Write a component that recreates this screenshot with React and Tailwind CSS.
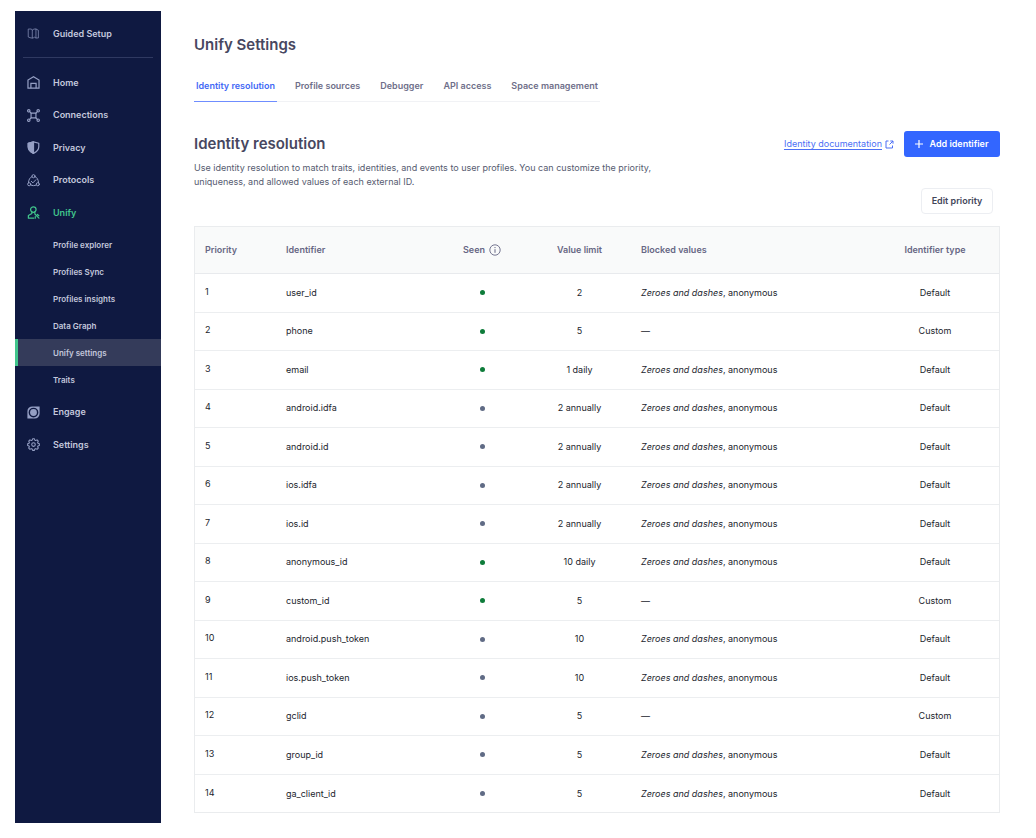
import React from "react";

const iconProps = {
  viewBox: "0 0 16 16",
  fill: "none",
  stroke: "currentColor",
  strokeWidth: 1.3,
  strokeLinecap: "round",
  strokeLinejoin: "round",
  className: "h-[13px] w-[13px] shrink-0",
  "aria-hidden": true,
};

const MapIcon = () => (
  <svg {...iconProps} strokeWidth={1}>
    <path d="M2 2.5h3.500L6.500 4l2-1.500H11L14 4v9.500h-3l-1.500-1-2 1H5l-3-1zM6.500 4v9.500M11 2.500v11" />
  </svg>
);

const HomeIcon = () => (
  <svg {...iconProps} strokeWidth={1.5} strokeLinecap="butt" strokeLinejoin="miter">
    <path d="M1.2 15V5L8 1l6.8 4v10z" />
    <path d="M4.8 15V9h6.4v6" />
  </svg>
);

const ConnectionsIcon = () => (
  <svg {...iconProps} strokeWidth={1.4}>
    <rect x="5" y="5" width="6" height="6" />
    <circle cx="2.2" cy="2.2" r="1.5" />
    <circle cx="13.8" cy="2.2" r="1.5" />
    <circle cx="2.2" cy="13.8" r="1.5" />
    <circle cx="13.8" cy="13.8" r="1.5" />
    <path d="M3.3 3.3 5 5m7.7-1.7L11 5m-7.7 7.7L5 11m7.7 1.7L11 11" />
  </svg>
);

const PrivacyIcon = () => (
  <svg {...iconProps} strokeWidth={1.5}>
    <path d="M8 1 14.5 2.8v4.4c0 3.6-2.6 6.2-6.5 8-3.9-1.8-6.5-4.4-6.5-8V2.8z" />
    <path d="M8 1v14.2c-3.9-1.8-6.5-4.4-6.5-8V2.8z" fill="currentColor" />
  </svg>
);

const ProtocolsIcon = () => (
  <svg {...iconProps} strokeWidth={1.2}>
    <circle cx="8" cy="2.7" r="1.9" />
    <circle cx="2.7" cy="12.6" r="1.9" />
    <circle cx="13.3" cy="12.6" r="1.9" />
    <path d="M6.1 3.2C3.6 4.2 2 6.9 1.8 10.6M9.9 3.2c2.5 1 4.1 3.7 4.3 7.4M4.7 13.6c2.1 1 4.5 1 6.6 0" />
    <path d="m5.3 9 2 1.9 3.6-3.8" />
  </svg>
);

const UnifyIcon = () => (
  <svg {...iconProps} strokeWidth={1.5}>
    <circle cx="7.8" cy="4.4" r="3.4" />
    <path d="M6 7.6v1.6L1.7 11.6V15h6.6M9.6 7.6v1.2" />
    <path d="m9.7 9.9 5 5M10.2 13v2M12.8 10.4l1.8 1.5" />
  </svg>
);

const EngageIcon = () => (
  <svg {...iconProps}>
    <path
      fill="currentColor"
      stroke="none"
      fillRule="evenodd"
      d="M6.5.5h9v9a6 6 0 0 1-6 6h-9v-9a6 6 0 0 1 6-6zM8 2a6 6 0 1 0 0 12A6 6 0 0 0 8 2z"
    />
    <circle cx="8" cy="8" r="4.2" fill="currentColor" stroke="none" />
  </svg>
);

const SettingsIcon = () => (
  <svg {...iconProps} strokeWidth={1.3}>
    <path d="M6.9 1h2.2l.6 1.7 1 .4 1.7-.8 1.5 1.5-.8 1.7.4 1 1.7.6v2l-1.7.6-.4 1 .8 1.7-1.5 1.5-1.7-.8-1 .4-.6 1.7H6.9l-.6-1.7-1-.4-1.7.8-1.5-1.5.8-1.7-.4-1L.8 9.1v-2l1.700-.6.4-1-.8-1.700 1.500-1.500 1.700.8 1-.4z" />
    <circle cx="8" cy="8.1" r="2.2" />
  </svg>
);

const navItems = [
  { label: "Home", icon: HomeIcon },
  { label: "Connections", icon: ConnectionsIcon },
  { label: "Privacy", icon: PrivacyIcon },
  { label: "Protocols", icon: ProtocolsIcon },
  {
    label: "Unify",
    icon: UnifyIcon,
    active: true,
    children: [
      "Profile explorer",
      "Profiles Sync",
      "Profiles insights",
      "Data Graph",
      "Unify settings",
      "Traits",
    ],
  },
  { label: "Engage", icon: EngageIcon },
  { label: "Settings", icon: SettingsIcon },
];

const tabs = [
  "Identity resolution",
  "Profile sources",
  "Debugger",
  "API access",
  "Space management",
];

const identifiers = [
  { name: "user_id", seen: true, limit: "2" },
  { name: "phone", seen: true, limit: "5", custom: true },
  { name: "email", seen: true, limit: "1 daily" },
  { name: "android.idfa", seen: false, limit: "2 annually" },
  { name: "android.id", seen: false, limit: "2 annually" },
  { name: "ios.idfa", seen: false, limit: "2 annually" },
  { name: "ios.id", seen: false, limit: "2 annually" },
  { name: "anonymous_id", seen: true, limit: "10 daily" },
  { name: "custom_id", seen: true, limit: "5", custom: true },
  { name: "android.push_token", seen: false, limit: "10" },
  { name: "ios.push_token", seen: false, limit: "10" },
  { name: "gclid", seen: false, limit: "5", custom: true },
  { name: "group_id", seen: false, limit: "5" },
  { name: "ga_client_id", seen: false, limit: "5" },
];

const Sidebar = () => (
  <nav className="w-[146px] shrink-0 bg-[#0f1941] text-[#c3c7dc]">
    <div className="mx-2 h-[47px] border-b border-[#2f3961]">
      <a
        href="#setup"
        className="flex h-[45px] items-center gap-[13px] pl-1 font-semibold"
      >
        <span className="text-[#7c86ae]">
          <MapIcon />
        </span>
        Guided Setup
      </a>
    </div>

    <ul className="pt-2">
      {navItems.map(({ label, icon: Icon, active, children }, index) => (
        <li key={label}>
          <a
            href={`#${label.toLowerCase()}`}
            className={`flex items-center gap-[13px] pl-3 font-semibold ${
              index % 2 ? "h-8" : "h-[33px]"
            } ${active ? "text-[#41c58c]" : ""}`}
          >
            <span className={active ? "text-[#41c58c]" : "text-[#959fc4]"}>
              <Icon />
            </span>
            {label}
          </a>
          {children && (
            <ul className="pt-0.5 pb-[3px]">
              {children.map((child) => (
                <li key={child}>
                  <a
                    href={`#${child.toLowerCase().replace(" ", "-")}`}
                    className={`flex h-[27px] items-center border-l-[3px] pl-[35px] text-[8px] font-semibold ${
                      child === "Unify settings"
                        ? "border-[#41c58c] bg-[#343b5a]"
                        : "border-transparent"
                    }`}
                  >
                    {child}
                  </a>
                </li>
              ))}
            </ul>
          )}
        </li>
      ))}
    </ul>
  </nav>
);

const IdentifierTable = () => (
  <div className="mt-3 border border-[#eaecee]">
    <table className="w-full table-fixed text-[#22252d]">
      <thead>
        <tr className="h-[46px] border-b border-[#e8eaed] bg-[#f9fafa] text-left text-[#676784]">
          <th className="w-[81px] px-2.5 font-semibold">Priority</th>
          <th className="w-[160px] px-2.5 font-semibold">Identifier</th>
          <th className="w-[92px] font-semibold">
            <span className="flex items-center justify-center gap-1">
              Seen
              <svg viewBox="0 0 12 12" className="h-3 w-3" fill="none" stroke="currentColor" aria-hidden="true">
                <circle cx="6" cy="6" r="5.2" strokeWidth="0.9" />
                <path d="M6 5.2v3.6M6 3v1.1" strokeWidth="1" />
              </svg>
            </span>
          </th>
          <th className="w-[103px] text-center font-semibold">Value limit</th>
          <th className="px-2.5 font-semibold">Blocked values</th>
          <th className="w-[128px] text-center font-semibold">Identifier type</th>
        </tr>
      </thead>
      <tbody>
        {identifiers.map((item, index) => (
          <tr
            key={item.name}
            className="h-[38px] border-b border-[#eceef0] last:border-b-0 odd:h-[39px]"
          >
            <td className="px-2.5 pb-0.5">{index + 1}</td>
            <td className="px-2.5">{item.name}</td>
            <td>
              <span
                role="img"
                aria-label={item.seen ? "Seen" : "Not seen"}
                className={`mx-auto block h-[5px] w-[5px] rounded-full ${
                  item.seen ? "bg-[#0e7c3a]" : "bg-[#606b85]"
                }`}
              />
            </td>
            <td className="text-center">{item.limit}</td>
            <td className="px-2.5">
              {item.custom ? (
                "—"
              ) : (
                <>
                  <em>Zeroes and dashes</em>, anonymous
                </>
              )}
            </td>
            <td className="text-center">{item.custom ? "Custom" : "Default"}</td>
          </tr>
        ))}
      </tbody>
    </table>
  </div>
);

const App = () => {
  return (
    <div className="flex min-h-screen bg-white pt-[11px] pr-9 pb-[15px] pl-[15px] font-['Inter',sans-serif] text-[9px]">
      <Sidebar />

      <main className="min-w-0 flex-1 pt-6 pl-[33px]">
        <h1 className="text-[15px] leading-5 font-semibold text-[#474760]">Unify Settings</h1>

        <div className="mt-[15px] flex w-fit gap-4 border-b border-[#f1f2f5] text-[#6f6f8a]" role="tablist">
          {tabs.map((tab, index) => (
            <button
              key={tab}
              role="tab"
              aria-selected={index === 0}
              className={`-mb-px h-8 border-b px-0.5 font-semibold ${
                index === 0 ? "border-[#6f8dff] text-[#4369f5]" : "border-transparent"
              }`}
            >
              {tab}
            </button>
          ))}
        </div>

        <div className="mt-[29px] flex items-start justify-between">
          <div className="w-[480px]">
            <h2 className="text-[15px] leading-[26px] font-semibold text-[#474760]">
              Identity resolution
            </h2>
            <p className="mt-1 mb-[-1px] leading-[14px] text-[#565b70]">
              Use identity resolution to match traits, identities, and events to user profiles. You
              can customize the priority, uniqueness, and allowed values of each external ID.
            </p>
          </div>
          <div className="flex items-center gap-2.5">
            <a href="#docs" className="flex items-center gap-[3px] text-[#4c6ff5]">
              <span className="underline underline-offset-2">Identity documentation</span>
              <svg viewBox="0 0 9 9" className="h-[9px] w-[9px]" fill="none" stroke="currentColor" aria-hidden="true">
                <path d="M3.5 1H1v7h6.500V5.500M5.300 1h2.700v2.700M8 1 4.500 4.500" />
              </svg>
            </a>
            <button className="flex h-[26px] w-24 items-center justify-center gap-1.5 rounded-[3px] bg-[#3366ff] font-semibold text-white">
              <svg viewBox="0 0 8 8" className="h-2 w-2" stroke="currentColor" strokeWidth="1.2" aria-hidden="true">
                <path d="M4 0v8M0 4h8" />
              </svg>
              Add identifier
            </button>
          </div>
        </div>

        <div className="flex justify-end pr-[7px]">
          <button className="h-[26px] w-[72px] rounded-[4px] border border-[#eceef2] font-semibold text-[#43465a]">
            Edit priority
          </button>
        </div>

        <IdentifierTable />
      </main>
    </div>
  );
};

export default App;
